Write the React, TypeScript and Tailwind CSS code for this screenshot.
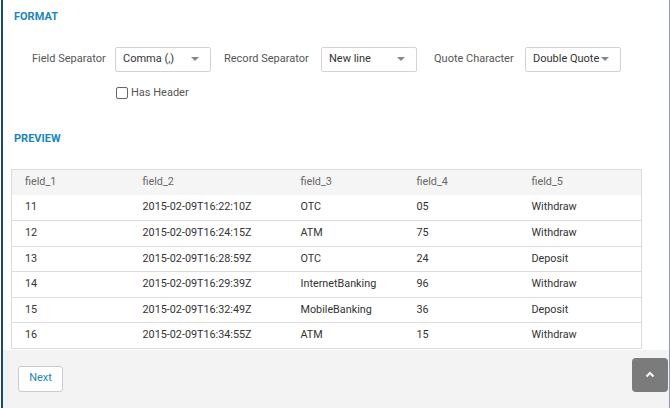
import { useState } from "react";

const rows = [
  ["11", "2015-02-09T16:22:10Z", "OTC", "05", "Withdraw"],
  ["12", "2015-02-09T16:24:15Z", "ATM", "75", "Withdraw"],
  ["13", "2015-02-09T16:28:59Z", "OTC", "24", "Deposit"],
  ["14", "2015-02-09T16:29:39Z", "InternetBanking", "96", "Withdraw"],
  ["15", "2015-02-09T16:32:49Z", "MobileBanking", "36", "Deposit"],
  ["16", "2015-02-09T16:34:55Z", "ATM", "15", "Withdraw"],
];

const Select = ({ value }: { value: string }) => (
  <div className="flex h-[25px] w-[96px] items-center justify-between rounded-[2px] border border-[#d3d3d3] bg-white pl-[7px] pr-[11px] text-[11px] text-[#333]">
    <span className="whitespace-nowrap">{value}</span>
    <span className="h-0 w-0 border-x-[4px] border-t-[4px] border-x-transparent border-t-[#888]" />
  </div>
);

const App = () => {
  const [hasHeader, setHasHeader] = useState(false);

  return (
    <div className="h-[408px] w-[670px] overflow-hidden bg-white pl-px font-['Roboto',sans-serif]">
      <div className="flex h-full flex-col border-l-2 border-r border-l-[#1e4a68] border-r-[#8d9aad]">
        <div className="flex flex-col bg-white pl-[8px] pr-[26px]">
          <div className="pt-[9px] pl-[3px] text-[11px] font-bold text-[#1b86b8]">FORMAT</div>

          <div className="mt-[21px] flex items-center pl-[21px] text-[11px] text-[#555]">
            <span className="w-[83px] whitespace-nowrap">Field Separator</span>
            <Select value="Comma (,)" />
            <span className="ml-[13px] w-[97px] whitespace-nowrap">Record Separator</span>
            <Select value="New line" />
            <span className="ml-[17px] w-[91px] whitespace-nowrap">Quote Character</span>
            <Select value="Double Quote" />
          </div>

          <label className="mt-[13px] ml-[105px] flex cursor-pointer items-center gap-[3px] text-[11px] text-[#555]">
            <span
              onClick={() => setHasHeader(!hasHeader)}
              className={`h-[12px] w-[12px] rounded-[2px] border border-[#666] ${hasHeader ? "bg-[#1b86b8]" : "bg-white"}`}
            />
            Has Header
          </label>

          <div className="mt-[30px] pl-[3px] text-[11px] font-bold text-[#1b86b8]">PREVIEW</div>

          <table className="mt-[21px] w-[631px] table-fixed border-collapse border border-[#dcdcdc] text-left text-[10.8px]">
            <thead>
              <tr className="h-[26px] bg-[#f5f5f5] text-[#666]">
                <th className="w-[131px] pl-[13px] font-normal">field_1</th>
                <th className="w-[158px] font-normal">field_2</th>
                <th className="w-[116px] font-normal">field_3</th>
                <th className="w-[115px] font-normal">field_4</th>
                <th className="font-normal">field_5</th>
              </tr>
            </thead>
            <tbody className="text-[#333]">
              {rows.map((row, i) => (
                <tr key={row[0]} className={`h-[25.5px] ${i < rows.length - 1 ? "border-b border-[#dcdcdc]" : ""}`}>
                  {row.map((cell, j) => (
                    <td key={j} className={j === 0 ? "pl-[13px]" : ""}>
                      {cell}
                    </td>
                  ))}
                </tr>
              ))}
            </tbody>
          </table>
        </div>

        <div className="mt-[1px] flex flex-1 items-start justify-between bg-[#f3f3f3] pl-[15px] pr-[1px]">
          <button className="mt-[16px] h-[26px] w-[45px] rounded-[3px] border border-[#ccc] bg-white text-[11px] text-[#1b86b8]">
            Next
          </button>
          <button className="mt-[8px] flex h-[34px] w-[36px] items-center justify-center rounded-[4px] bg-[#7b7b7b]">
            <svg width="10" height="7" viewBox="0 0 10 7">
              <path d="M1.5 5.5 L5 2 L8.5 5.5" fill="none" stroke="white" strokeWidth="2" />
            </svg>
          </button>
        </div>
      </div>
    </div>
  );
};

export default App;
